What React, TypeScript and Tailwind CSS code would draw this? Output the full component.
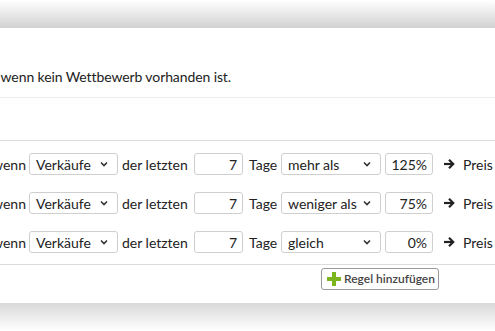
import React from "react";

function Chevron() {
  return (
    <svg width="8" height="6" viewBox="0 0 8 6" className="shrink-0">
      <path d="M1 1.5 L4 4.5 L7 1.5" fill="none" stroke="#333" strokeWidth="1.6" />
    </svg>
  );
}

function Select({ value, w }: { value: string; w: string }) {
  return (
    <div className={`${w} shrink-0 h-[22px] flex items-center justify-between pl-[6px] pr-[9px] border border-[#cfcfcf] rounded-[3px] bg-white`}>
      <span>{value}</span>
      <Chevron />
    </div>
  );
}

function Input({ value, w }: { value: string; w: string }) {
  return (
    <div className={`${w} shrink-0 h-[22px] flex items-center justify-end pr-[5px] border border-[#cfcfcf] rounded-[3px] bg-white`}>
      {value}
    </div>
  );
}

function Arrow() {
  return (
    <svg width="12" height="12" viewBox="0 0 12 12" className="shrink-0">
      <path d="M1 6 H10" stroke="#222" strokeWidth="2.2" />
      <path d="M6 1.8 L10.2 6 L6 10.2" fill="none" stroke="#222" strokeWidth="2.2" />
    </svg>
  );
}

function Row({ cmp, pct }: { cmp: string; pct: string }) {
  return (
    <div className="flex items-center h-[22px] whitespace-nowrap">
      <div className="w-[29px] shrink-0 flex justify-end pr-[3px]">
        <span>wenn</span>
      </div>
      <Select value="Verkäufe" w="w-[89px]" />
      <span className="ml-[4px] w-[72px] shrink-0">der letzten</span>
      <Input value="7" w="w-[49px]" />
      <span className="ml-[6px] w-[32px] shrink-0">Tage</span>
      <Select value={cmp} w="w-[100px]" />
      <div className="ml-[4px] shrink-0">
        <Input value={pct} w="w-[48px]" />
      </div>
      <div className="ml-[10px] mr-[8px] shrink-0 flex">
        <Arrow />
      </div>
      <span className="shrink-0">Preis um 10% erhöhen</span>
    </div>
  );
}

export default function App() {
  return (
    <div className="w-[495px] h-[331px] overflow-hidden bg-white text-[#222] text-[14px] font-['Lato','Noto_Sans',sans-serif]">
      <div className="h-[28px] bg-gradient-to-b from-white to-[#d2d2d2]" />
      <div className="h-[275px] bg-white flex flex-col">
        <div className="h-[69px] flex items-end pb-[10px]">
          <div className="w-[231px] shrink-0 flex justify-end whitespace-nowrap tracking-[-0.1px]">
            <span>Die Preise werden angepasst werden, wenn kein Wettbewerb vorhanden ist.</span>
          </div>
        </div>
        <div className="h-px bg-[#ececec]" />
        <div className="h-[42px]" />
        <div className="h-px bg-[#dcdcdc]" />
        <div className="flex flex-col gap-[17px] pt-[12px] pb-[11px] overflow-hidden">
          <Row cmp="mehr als" pct="125%" />
          <Row cmp="weniger als" pct="75%" />
          <Row cmp="gleich" pct="0%" />
        </div>
        <div className="h-px bg-[#dcdcdc]" />
        <div className="flex pl-[321px] pt-[3px]">
          <div className="h-[22px] w-[118px] shrink-0 whitespace-nowrap flex items-center gap-[3px] pl-[5px] border border-[#9a9a9a] rounded-[3px] text-[12px] font-semibold text-[#444]">
            <svg width="14" height="14" viewBox="0 0 14 14" className="shrink-0">
              <rect x="5" y="0" width="4" height="14" fill="#7db51e" />
              <rect x="0" y="5" width="14" height="4" fill="#7db51e" />
            </svg>
            <span>Regel hinzufügen</span>
          </div>
        </div>
      </div>
      <div className="h-[28px] bg-gradient-to-b from-[#d9d9d9] to-white" />
    </div>
  );
}
